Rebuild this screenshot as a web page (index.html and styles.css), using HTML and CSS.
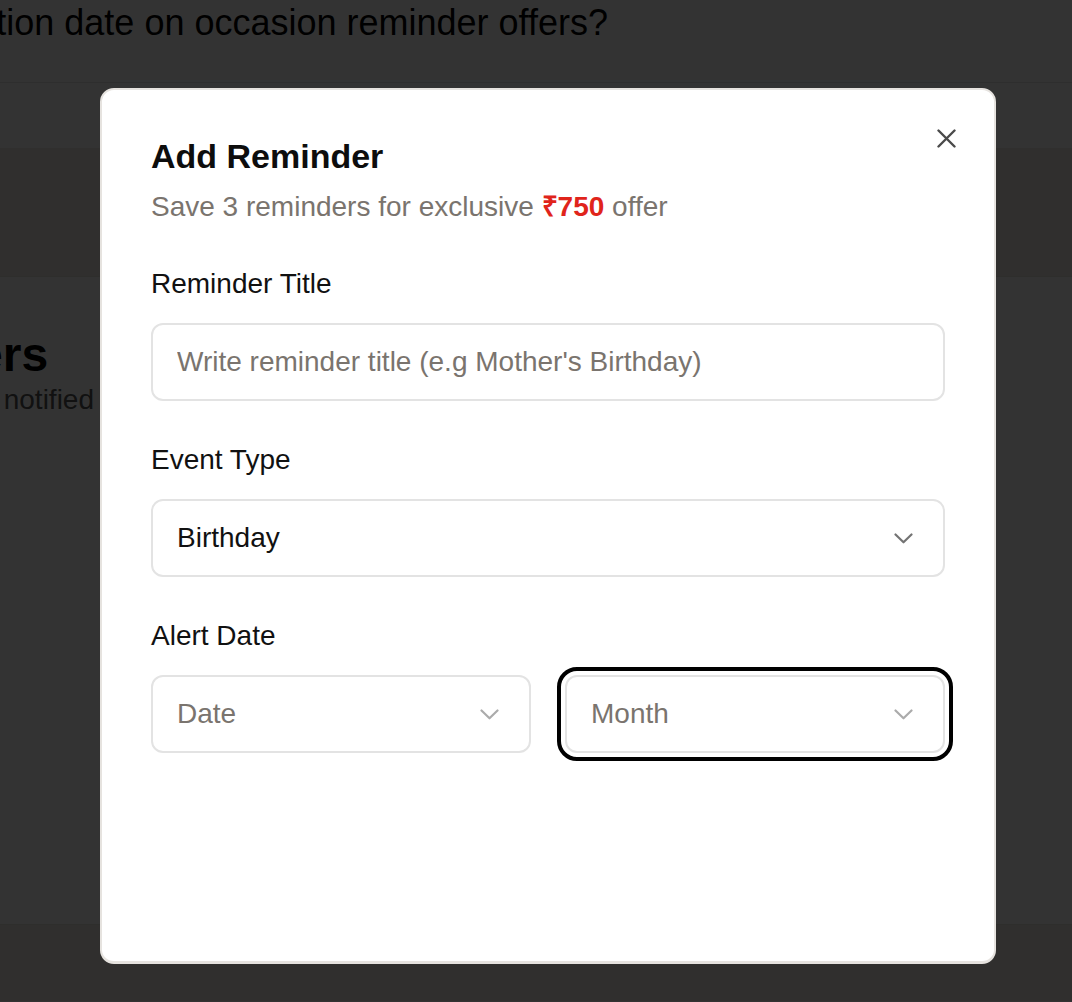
FILE: index.html
```html
<!DOCTYPE html>
<html lang="en">
<head>
<meta charset="utf-8">
<title>Add Reminder</title>
<link rel="stylesheet" href="styles.css">
</head>
<body>
<div class="page">
  <div class="faq-row"><p class="faq-q">Can I change the notification date on occasion reminder offers?</p></div>
  <div class="faq-row faq-row-empty"></div>
  <div class="band"></div>
  <section class="reminders">
    <div class="reminders-intro">
      <h2 class="reminders-title">Reminders</h2>
      <p class="reminders-sub">Add dates to get notified before every occasion</p>
    </div>
  </section>
  <div class="band band-foot"></div>
</div>

<div class="overlay">
  <div class="modal" role="dialog" aria-labelledby="modal-title">
    <button class="close" aria-label="Close">
      <svg width="19" height="19" viewBox="0 0 19 19"><path d="M1.5 1.5 L17.5 17.5 M17.5 1.5 L1.5 17.5" stroke="#4a4a4a" stroke-width="2.4" stroke-linecap="round" fill="none"/></svg>
    </button>
    <h1 class="modal-title" id="modal-title">Add Reminder</h1>
    <p class="modal-sub">Save 3 reminders for exclusive <strong class="price">₹750</strong> offer</p>

    <div class="field">
      <label class="field-label">Reminder Title</label>
      <input class="control control-input" type="text" placeholder="Write reminder title (e.g Mother's Birthday)">
    </div>

    <div class="field">
      <label class="field-label">Event Type</label>
      <div class="control control-select">
        <span class="value">Birthday</span>
        <svg class="chev chev-dark" width="19" height="11" viewBox="0 0 19 11"><path d="M1.5 1.5 L9.5 9.3 L17.5 1.5" fill="none" stroke="#737373" stroke-width="2.2" stroke-linecap="round" stroke-linejoin="round"/></svg>
      </div>
    </div>

    <div class="field">
      <label class="field-label">Alert Date</label>
      <div class="date-row">
        <div class="control control-select">
          <span class="value muted">Date</span>
          <svg class="chev" width="19" height="11" viewBox="0 0 19 11"><path d="M1.5 1.5 L9.5 9.3 L17.5 1.5" fill="none" stroke="#ababab" stroke-width="2.2" stroke-linecap="round" stroke-linejoin="round"/></svg>
        </div>
        <div class="control control-select focused">
          <span class="value muted">Month</span>
          <svg class="chev" width="19" height="11" viewBox="0 0 19 11"><path d="M1.5 1.5 L9.5 9.3 L17.5 1.5" fill="none" stroke="#ababab" stroke-width="2.2" stroke-linecap="round" stroke-linejoin="round"/></svg>
        </div>
      </div>
    </div>
  </div>
</div>
</body>
</html>
```
FILE: styles.css
```css
* { box-sizing: border-box; }

html, body {
  margin: 0;
  padding: 0;
}

body {
  font-family: "Liberation Sans", Arial, Helvetica, sans-serif;
  color: #111;
  background: #ffffff;
  overflow: hidden;
}

.page {
  width: 1072px;
  height: 1002px;
  overflow: hidden;
}

.faq-row {
  height: 83px;
  border-bottom: 1px solid #e6e6e6;
  overflow: hidden;
}

.faq-row-empty {
  height: 65px;
  border-bottom: none;
}

.faq-q {
  margin: 0 0 0 -402px;
  font-size: 36px;
  line-height: 42px;
  padding-top: 2px;
  white-space: nowrap;
  color: #000;
}

.band {
  height: 129px;
  background: #f0ece4;
  border-bottom: 1px solid #e6e3dd;
}

.band-foot {
  height: 77px;
  border-top: 1px solid #e6e3dd;
  border-bottom: none;
}

.reminders {
  height: 647px;
  overflow: hidden;
}

.reminders-intro {
  margin-left: -200px;
  padding-top: 51px;
  white-space: nowrap;
}

.reminders-title {
  margin: 0;
  font-size: 48px;
  line-height: 54px;
  font-weight: 700;
  color: #000;
}

.reminders-sub {
  margin: 0 0 0 -8px;
  font-size: 28px;
  line-height: 36px;
  color: #555;
}

.overlay {
  position: fixed;
  inset: 0;
  background: rgba(0, 0, 0, 0.8);
  padding: 88px 0 0 100px;
}

.modal {
  position: relative;
  width: 896px;
  height: 876px;
  background: #fff;
  border: 2px solid #e6e3df;
  border-bottom-width: 3px;
  border-radius: 14px;
  padding: 46px 49px 0;
}

.close {
  position: absolute;
  top: 39px;
  right: 38px;
  width: 19px;
  height: 19px;
  padding: 0;
  border: 0;
  background: none;
  display: block;
}

.close svg { display: block; }

.modal-title {
  margin: 0;
  font-size: 34px;
  line-height: 40px;
  font-weight: 700;
  color: #0d0d0d;
}

.modal-sub {
  margin: 13px 0 0;
  font-size: 28px;
  line-height: 36px;
  color: #7a746e;
}

.price {
  color: #e0241b;
  font-weight: 700;
}

.field {
  margin-top: 41px;
  display: flex;
  flex-direction: column;
  gap: 21px;
}

.modal-sub + .field { margin-top: 41px; }

.field-label {
  font-size: 28px;
  line-height: 36px;
  color: #111;
}

.control {
  height: 78px;
  border: 2px solid #e3e3e3;
  border-radius: 12px;
  background: #fff;
  font-family: inherit;
  font-size: 28px;
  padding: 0 30px 0 24px;
}

.control-input {
  width: 100%;
  color: #111;
  outline: none;
}

.control-input::placeholder {
  color: #7a746e;
  opacity: 1;
}

.control-select {
  display: flex;
  align-items: center;
  justify-content: space-between;
}

.value {
  color: #111;
}

.value.muted {
  color: #7a746e;
}

.chev {
  display: block;
  margin-top: 1px;
}

.date-row {
  display: grid;
  grid-template-columns: 380px 380px;
  gap: 34px;
}

.focused {
  outline: 4px solid #000;
  outline-offset: 4px;
}
```
